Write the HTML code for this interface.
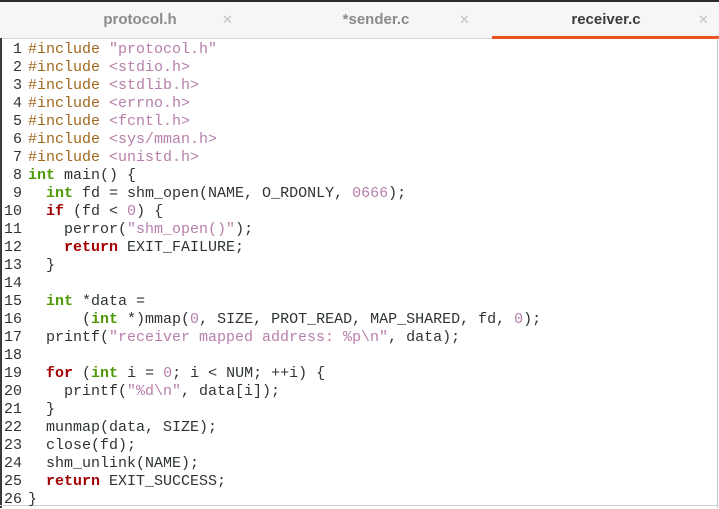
<!DOCTYPE html><html><head><style>
body{margin:0;width:719px;height:508px;overflow:hidden;background:#fff;position:relative;font-family:"Liberation Sans",sans-serif}
.top{position:absolute;left:0;top:0;width:719px;height:2px;background:#2c2c2c}
.bar{position:absolute;left:0;top:2px;width:719px;height:36px;background:#f6f6f6;border-bottom:1px solid #d6d6d6}
.tab{position:absolute;top:2px;height:36px;line-height:36px;font-size:15px;font-weight:bold;color:#8a8a8a;text-align:center}
.x{position:absolute;top:2px;line-height:36px;font-size:13px;color:#c4c4c4}
.ul{position:absolute;left:492px;top:36px;width:227px;height:3px;background:#e95420}
.left{position:absolute;left:0;top:38px;width:2px;height:470px;background:#3a3a3a}
.right{position:absolute;left:717px;top:38px;width:1px;height:470px;background:#c8c8c8}
.bot{position:absolute;left:0;top:505px;width:719px;height:1px;background:#d0d0d0}
pre{position:absolute;margin:0;top:41px;font-family:"Liberation Mono",monospace;font-size:15px;line-height:18px;color:#2e3436}
.ln{left:4px;width:18px;text-align:right}
.code{left:28px}
.p{color:#a3671e}.s{color:#b77fab}.t{color:#4e9a06;font-weight:bold}.k{color:#a40000;font-weight:bold}
</style></head><body>
<div class="top"></div><div class="bar"></div>
<div class="tab" style="left:40px;width:200px">protocol.h</div><div class="x" style="left:222px">✕</div>
<div class="tab" style="left:276px;width:200px">*sender.c</div><div class="x" style="left:459px">✕</div>
<div class="tab" style="left:506px;width:200px;color:#3c3c3c">receiver.c</div><div class="x" style="left:698px">✕</div>
<div class="ul"></div>
<div class="left"></div><div class="right"></div><div class="bot"></div>
<pre class="ln"> 1
 2
 3
 4
 5
 6
 7
 8
 9
10
11
12
13
14
15
16
17
18
19
20
21
22
23
24
25
26</pre>
<pre class="code"><span class="p">#include</span> <span class="s">"protocol.h"</span>
<span class="p">#include</span> <span class="s">&lt;stdio.h&gt;</span>
<span class="p">#include</span> <span class="s">&lt;stdlib.h&gt;</span>
<span class="p">#include</span> <span class="s">&lt;errno.h&gt;</span>
<span class="p">#include</span> <span class="s">&lt;fcntl.h&gt;</span>
<span class="p">#include</span> <span class="s">&lt;sys/mman.h&gt;</span>
<span class="p">#include</span> <span class="s">&lt;unistd.h&gt;</span>
<span class="t">int</span> main() {
  <span class="t">int</span> fd = shm_open(NAME, O_RDONLY, <span class="s">0666</span>);
  <span class="k">if</span> (fd &lt; <span class="s">0</span>) {
    perror(<span class="s">"shm_open()"</span>);
    <span class="k">return</span> EXIT_FAILURE;
  }

  <span class="t">int</span> *data =
      (<span class="t">int</span> *)mmap(<span class="s">0</span>, SIZE, PROT_READ, MAP_SHARED, fd, <span class="s">0</span>);
  printf(<span class="s">"receiver mapped address: %p\n"</span>, data);

  <span class="k">for</span> (<span class="t">int</span> i = <span class="s">0</span>; i &lt; NUM; ++i) {
    printf(<span class="s">"%d\n"</span>, data[i]);
  }
  munmap(data, SIZE);
  close(fd);
  shm_unlink(NAME);
  <span class="k">return</span> EXIT_SUCCESS;
}</pre>
</body></html>
